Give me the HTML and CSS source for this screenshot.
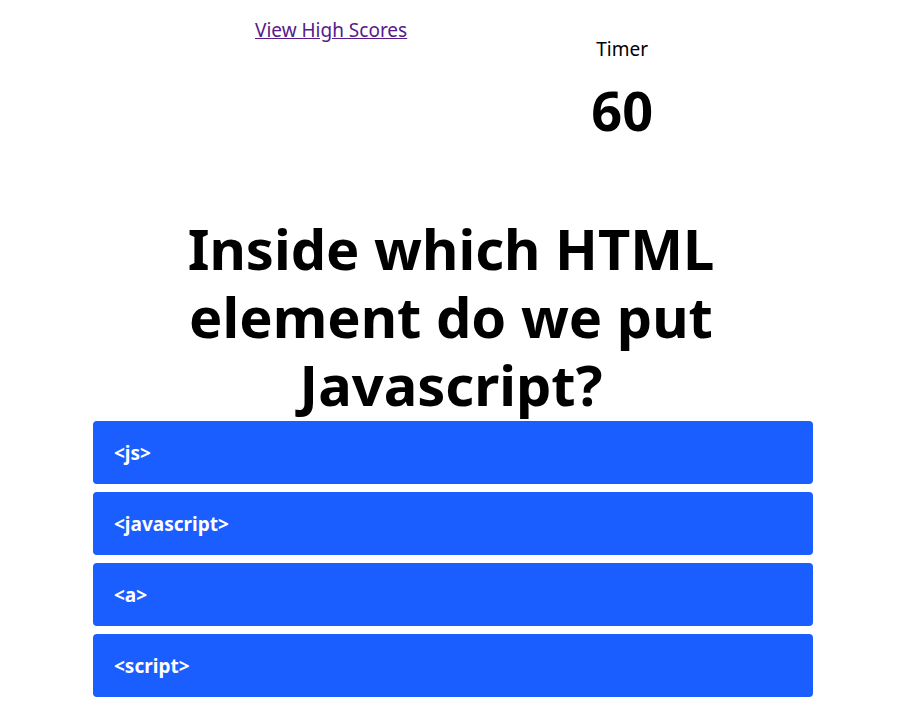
FILE: index.html
```html
<!DOCTYPE html>
<html lang="en">
<head>
<meta charset="utf-8">
<title>Quiz</title>
<link rel="stylesheet" href="styles.css">
</head>
<body>
<header class="top">
  <a class="scores-link" href="#">View High Scores</a>
  <div class="timer">
    <div class="timer-label">Timer</div>
    <div class="timer-value">60</div>
  </div>
</header>
<main class="quiz">
  <h1 class="question">Inside which HTML element do we put Javascript?</h1>
  <div class="answers">
    <button class="answer">&lt;js&gt;</button>
    <button class="answer">&lt;javascript&gt;</button>
    <button class="answer">&lt;a&gt;</button>
    <button class="answer">&lt;script&gt;</button>
  </div>
</main>
</body>
</html>
```
FILE: styles.css
```css
html, body {
  margin: 0;
  padding: 0;
  background: #ffffff;
}
body {
  font-family: "Noto Sans", "DejaVu Sans", sans-serif;
  color: #000;
}
.top {
  display: flex;
  align-items: flex-start;
  padding: 18px 0 0 255px;
  height: 150px;
  box-sizing: border-box;
}
.scores-link {
  color: #551a8b;
  font-size: 19px;
  line-height: 24px;
  text-decoration: underline;
}
.timer {
  margin-left: 180px;
  width: 70px;
  text-align: center;
  padding-top: 20px;
}
.timer-label {
  font-size: 19px;
  line-height: 22px;
}
.timer-value {
  font-size: 54px;
  font-weight: bold;
  line-height: 60px;
  margin-top: 20px;
}
.quiz {
  display: flex;
  flex-direction: column;
  align-items: center;
  padding-top: 64px;
}
.question {
  width: 560px;
  margin: 0;
  text-align: center;
  font-size: 56px;
  line-height: 68px;
  font-weight: bold;
}
.answers {
  width: 720px;
  margin: 0 0 0 4px;
  display: flex;
  flex-direction: column;
  gap: 8px;
  padding-top: 3px;
}
.answer {
  display: block;
  width: 100%;
  height: 63px;
  border: none;
  border-radius: 4px;
  background: #1a5eff;
  color: #fff;
  font-family: inherit;
  font-size: 19px;
  font-weight: bold;
  text-align: left;
  padding: 0 21px;
}
```
